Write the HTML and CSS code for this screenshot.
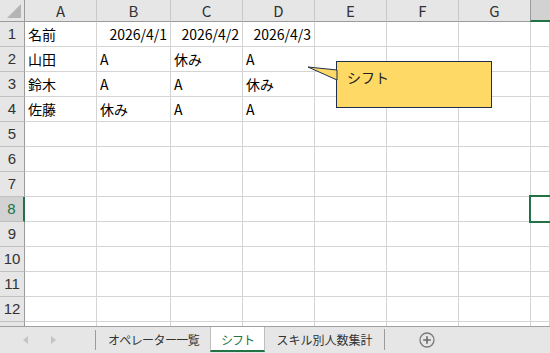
FILE: index.html
```html
<!DOCTYPE html>
<html lang="ja">
<head>
  <meta charset="UTF-8">
  <title>シフト</title>
  <link rel="stylesheet" href="styles.css">
</head>
<body>
  <div class="sheet">
    <!-- セルのグリッド -->
    <div class="grid">
      <div class="corner"><span class="corner-mark"></span></div>
      <div class="col-head">A</div>
      <div class="col-head">B</div>
      <div class="col-head">C</div>
      <div class="col-head">D</div>
      <div class="col-head">E</div>
      <div class="col-head">F</div>
      <div class="col-head">G</div>
      <div class="col-head col-active"></div>

      <div class="row-head">1</div>
      <div class="cell">名前</div>
      <div class="cell num">2026/4/1</div>
      <div class="cell num">2026/4/2</div>
      <div class="cell num">2026/4/3</div>
      <div class="cell"></div><div class="cell"></div><div class="cell"></div><div class="cell"></div>

      <div class="row-head">2</div>
      <div class="cell">山田</div>
      <div class="cell">A</div>
      <div class="cell">休み</div>
      <div class="cell">A</div>
      <div class="cell"></div><div class="cell"></div><div class="cell"></div><div class="cell"></div>

      <div class="row-head">3</div>
      <div class="cell">鈴木</div>
      <div class="cell">A</div>
      <div class="cell">A</div>
      <div class="cell">休み</div>
      <div class="cell"></div><div class="cell"></div><div class="cell"></div><div class="cell"></div>

      <div class="row-head">4</div>
      <div class="cell">佐藤</div>
      <div class="cell">休み</div>
      <div class="cell">A</div>
      <div class="cell">A</div>
      <div class="cell"></div><div class="cell"></div><div class="cell"></div><div class="cell"></div>

      <div class="row-head">5</div>
      <div class="cell"></div><div class="cell"></div><div class="cell"></div><div class="cell"></div>
      <div class="cell"></div><div class="cell"></div><div class="cell"></div><div class="cell"></div>

      <div class="row-head">6</div>
      <div class="cell"></div><div class="cell"></div><div class="cell"></div><div class="cell"></div>
      <div class="cell"></div><div class="cell"></div><div class="cell"></div><div class="cell"></div>

      <div class="row-head">7</div>
      <div class="cell"></div><div class="cell"></div><div class="cell"></div><div class="cell"></div>
      <div class="cell"></div><div class="cell"></div><div class="cell"></div><div class="cell"></div>

      <div class="row-head row-active">8</div>
      <div class="cell"></div><div class="cell"></div><div class="cell"></div><div class="cell"></div>
      <div class="cell"></div><div class="cell"></div><div class="cell"></div>
      <div class="cell selected"><span class="sel-box"></span></div>

      <div class="row-head">9</div>
      <div class="cell"></div><div class="cell"></div><div class="cell"></div><div class="cell"></div>
      <div class="cell"></div><div class="cell"></div><div class="cell"></div><div class="cell"></div>

      <div class="row-head">10</div>
      <div class="cell"></div><div class="cell"></div><div class="cell"></div><div class="cell"></div>
      <div class="cell"></div><div class="cell"></div><div class="cell"></div><div class="cell"></div>

      <div class="row-head">11</div>
      <div class="cell"></div><div class="cell"></div><div class="cell"></div><div class="cell"></div>
      <div class="cell"></div><div class="cell"></div><div class="cell"></div><div class="cell"></div>

      <div class="row-head">12</div>
      <div class="cell"></div><div class="cell"></div><div class="cell"></div><div class="cell"></div>
      <div class="cell"></div><div class="cell"></div><div class="cell"></div><div class="cell"></div>

      <div class="row-head last"></div>
      <div class="cell last"></div><div class="cell last"></div><div class="cell last"></div><div class="cell last"></div>
      <div class="cell last"></div><div class="cell last"></div><div class="cell last"></div><div class="cell last"></div>
    </div>

    <!-- シートタブ -->
    <div class="tabbar">
      <div class="nav">
        <span class="arrow arrow-left"></span>
        <span class="arrow arrow-right"></span>
      </div>
      <div class="tab tab-ops">オペレーター一覧</div>
      <div class="tab tab-active">シフト</div>
      <div class="tab tab-skill">スキル別人数集計</div>
      <div class="add">
        <svg width="16" height="16" viewBox="0 0 16 16">
          <circle cx="8" cy="8" r="7" fill="none" stroke="#7a7a7a" stroke-width="1.3"/>
          <path d="M8 4.2v7.6M4.2 8h7.6" stroke="#6a6a6a" stroke-width="1.6"/>
        </svg>
      </div>
    </div>
  </div>

  <!-- 吹き出し図形 -->
  <svg class="callout-tail" width="32" height="18" viewBox="0 0 32 18">
    <polygon points="1,2 30,5 30,15" fill="#ffd966" stroke="#1f2e4c" stroke-width="1"/>
  </svg>
  <div class="callout">シフト</div>
</body>
</html>
```

FILE: styles.css
```css
body {
  margin: 0;
  width: 550px;
  height: 353px;
  overflow: hidden;
  position: relative;
  background: #fff;
  font-family: "Noto Sans CJK JP", "Liberation Sans", sans-serif;
  color: #000;
}

.sheet {
  display: flex;
  flex-direction: column;
  height: 353px;
}

/* グリッド */
.grid {
  display: grid;
  grid-template-columns: 25px 72px 74px 72px 72px 72px 72px 72px 1fr;
  grid-template-rows: 22px repeat(12, 25px) 4px;
  height: 326px;
  overflow: hidden;
}

.grid > div {
  box-sizing: border-box;
}

.corner {
  background: #e6e6e6;
  border-right: 1px solid #9b9b9b;
  border-bottom: 1px solid #9b9b9b;
  position: relative;
}

.corner-mark {
  position: absolute;
  right: 3px;
  bottom: 3px;
  width: 0;
  height: 0;
  border-left: 14px solid transparent;
  border-bottom: 14px solid #b4b4b4;
}

.col-head {
  background: #e6e6e6;
  border-right: 1px solid #c8c8c8;
  border-bottom: 1px solid #9b9b9b;
  text-align: center;
  font-size: 15px;
  line-height: 21px;
  color: #333;
}

.col-head.col-active {
  background: #d2d2d2;
  border-left: 1px solid #9b9b9b;
  border-right: none;
  border-bottom: 2px solid #217346;
  margin-left: -1px;
}

.row-head {
  background: #e6e6e6;
  border-right: 1px solid #9b9b9b;
  border-bottom: 1px solid #c0c0c0;
  text-align: center;
  font-size: 15px;
  line-height: 24px;
  color: #333;
  font-family: "Liberation Sans", sans-serif;
}

.row-head.row-active {
  background: #d2d2d2;
  color: #217346;
  border-right: 2px solid #217346;
}

.cell {
  border-right: 1px solid #d4d4d4;
  border-bottom: 1px solid #d4d4d4;
  font-size: 14px;
  line-height: 24px;
  padding-left: 3px;
  white-space: nowrap;
}

.cell.num {
  text-align: right;
  padding-right: 3px;
}

.row-head.last,
.cell.last {
  border-bottom: none;
}

.cell.selected {
  position: relative;
}

.sel-box {
  position: absolute;
  left: -2px;
  top: -2px;
  right: -10px;
  bottom: -2px;
  border: 2px solid #217346;
}

/* タブバー */
.tabbar {
  display: flex;
  height: 27px;
  box-sizing: border-box;
  border-top: 1px solid #a0a0a0;
  background: #e6e6e6;
  font-size: 12px;
  color: #333;
}

.nav {
  width: 96px;
  display: flex;
  align-items: center;
  box-sizing: border-box;
  padding-left: 23px;
  gap: 23px;
  position: relative;
}

.nav::after {
  content: "";
  position: absolute;
  right: 0;
  top: 3px;
  bottom: 3px;
  width: 1px;
  background: #9b9b9b;
}

.arrow {
  width: 0;
  height: 0;
  border-top: 4px solid transparent;
  border-bottom: 4px solid transparent;
}

.arrow-left {
  border-right: 5px solid #c4c4c4;
}

.arrow-right {
  border-left: 5px solid #c4c4c4;
}

.tab {
  display: flex;
  align-items: center;
  justify-content: center;
  box-sizing: border-box;
  height: 25px;
  white-space: nowrap;
}

.tab-ops {
  width: 113px;
  margin-left: 1px;
  letter-spacing: -0.6px;
}

.tab-active {
  width: 55px;
  background: #fff;
  color: #217346;
  border-left: 1px solid #bdbdbd;
  border-right: 1px solid #bdbdbd;
  border-bottom: 2px solid #217346;
  padding-top: 1px;
  letter-spacing: -1px;
}

.tab-skill {
  width: 120px;
  border-right: 1px solid #9b9b9b;
  height: 21px;
  margin-top: 2px;
}

.add {
  display: flex;
  align-items: center;
  padding-left: 34px;
}

/* 吹き出し */
.callout {
  position: absolute;
  left: 336px;
  top: 61px;
  width: 156px;
  height: 47px;
  box-sizing: border-box;
  background: #ffd966;
  border: 1px solid #1f2e4c;
  font-size: 14px;
  line-height: 30px;
  padding-left: 10px;
  color: #222;
}

.callout-tail {
  position: absolute;
  left: 307px;
  top: 65px;
  z-index: 1;
}
```
